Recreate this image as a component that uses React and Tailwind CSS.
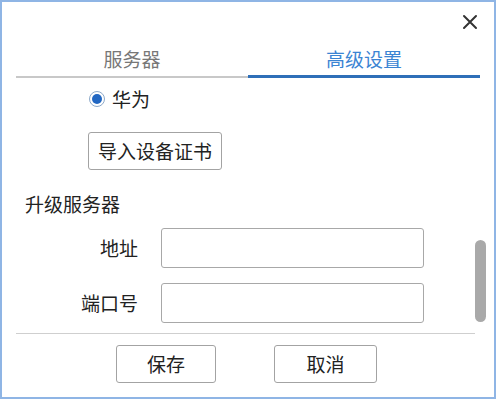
const font = { fontFamily: '"Noto Sans CJK SC", "Noto Sans", sans-serif' };

const CloseIcon = () => (
  <svg width="16" height="16" viewBox="0 0 16 16" className="text-[#333]">
    <path d="M2 2 L14 14 M14 2 L2 14" stroke="currentColor" strokeWidth="2" strokeLinecap="round" />
  </svg>
);

const App = () => {
  return (
    <div
      className="w-[496px] h-[399px] bg-white border-2 border-[#8fb5e5] flex flex-col text-[#222] text-[19px] overflow-hidden"
      style={font}
    >
      {/* Header */}
      <div className="h-[38px] flex justify-end items-start pt-[12px] pr-[16px] shrink-0">
        <button className="w-[16px] h-[16px] flex items-center justify-center">
          <CloseIcon />
        </button>
      </div>

      {/* Tabs */}
      <div className="h-[38px] mx-[14px] flex shrink-0">
        <div className="flex-1 flex items-center justify-center border-b-2 border-[#c8c8c8] text-[#777] leading-[24px] pt-[2px]">
          服务器
        </div>
        <div className="flex-1 flex items-center justify-center border-b-[3px] border-[#2f6fb8] text-[#3b84d3] leading-[24px] pt-[3px]">
          高级设置
        </div>
      </div>

      {/* Content */}
      <div className="h-[255px] flex shrink-0">
        <div className="w-[473px] overflow-hidden flex flex-col">
          <div className="mt-[10px] ml-[87px] h-[22px] flex items-center gap-[7px]">
            <span className="w-[16px] h-[16px] rounded-full border border-[#8da9c9] bg-white flex items-center justify-center">
              <span className="w-[10px] h-[10px] rounded-full bg-[#2267c2]" />
            </span>
            <span className="leading-[22px]">华为</span>
          </div>

          <button className="mt-[22px] ml-[86px] w-[134px] h-[38px] border border-[#a3a3a3] rounded-[3px] bg-white leading-[24px]">
            导入设备证书
          </button>

          <div className="mt-[22px] ml-[23px] leading-[24px]">升级服务器</div>

          <div className="mt-[12px] flex items-center">
            <span className="w-[136px] text-right leading-[24px]">地址</span>
            <input className="ml-[23px] w-[263px] h-[40px] border border-[#a8a8a8] rounded-[3px] outline-none px-2" />
          </div>

          <div className="mt-[15px] flex items-center">
            <span className="w-[136px] text-right leading-[24px]">端口号</span>
            <input className="ml-[23px] w-[263px] h-[40px] border border-[#a8a8a8] rounded-[3px] outline-none px-2" />
          </div>
        </div>

        {/* Scrollbar */}
        <div className="w-[11px] flex flex-col">
          <div className="mt-[162px] h-[82px] rounded-full bg-[#a9a9a9]" />
        </div>
      </div>

      {/* Footer */}
      <div className="mx-[14px] w-[459px] h-px bg-[#cfcfcf] shrink-0" />
      <div className="mt-[11px] flex shrink-0">
        <button className="ml-[114px] w-[100px] h-[38px] border border-[#a3a3a3] rounded-[3px] bg-white leading-[24px]">
          保存
        </button>
        <button className="ml-[58px] w-[103px] h-[38px] border border-[#a3a3a3] rounded-[3px] bg-white leading-[24px]">
          取消
        </button>
      </div>
    </div>
  );
};

export default App;
